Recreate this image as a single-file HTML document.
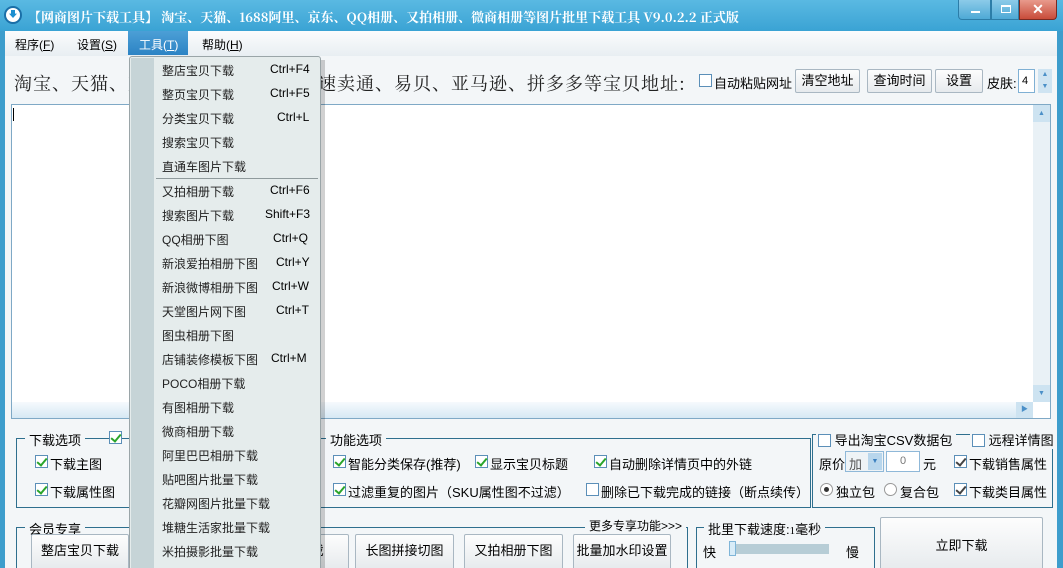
<!DOCTYPE html>
<html><head><meta charset="utf-8"><style>
*{box-sizing:border-box;margin:0;padding:0}
html{width:1063px;height:568px;overflow:hidden}
body{width:1063px;height:568px;overflow:hidden;position:relative;background:#3d9dcc;font-family:"Liberation Sans","Noto Sans CJK SC","WenQuanYi Zen Hei",sans-serif;font-size:12px;color:#000}
.a{position:absolute;white-space:nowrap}
.title{left:0;top:0;width:1063px;height:31px;background:linear-gradient(#5ab9e2,#3aa3d4);}
.client{left:5px;top:31px;width:1052px;height:537px;background:#f3f6f8}
.menubar{left:5px;top:31px;width:1052px;height:25px;background:linear-gradient(#fbfcfd,#e8eef2)}
.cb{position:absolute;width:13px;height:13px;border:1px solid #5b8fb8;background:#fff}
.cb.on::after{content:"";position:absolute;left:3px;top:0px;width:4px;height:8px;border:solid #2aa52a;border-width:0 2px 2px 0;transform:rotate(40deg)}
.cb.g::after{border-color:#444}
.btn{position:absolute;border:1px solid #a9b7c2;border-radius:2px;background:linear-gradient(#fdfdfd,#e6eaed);text-align:center;font-size:13px;white-space:nowrap}
.grp{position:absolute;border:1px solid #2e6f8e}
.lg{position:absolute;background:#f3f6f8;padding:0 4px;font-size:13px;white-space:nowrap}
.mi{position:absolute;left:162px;font-size:12px;color:#222;white-space:nowrap}
</style></head><body>
<div class="a title"></div>
<div class="a" style="left:4px;top:6px;width:18px;height:18px;border-radius:50%;background:#fff;border:2px solid #1a6fa8"><div style="position:absolute;left:3px;top:2px;width:8px;height:8px;background:#1d8fd0;clip-path:polygon(25% 0,75% 0,75% 45%,100% 45%,50% 100%,0 45%,25% 45%)"></div></div>
<div class="a" style="left:28px;top:7px;color:#fff;font-weight:bold;font-size:13px;font-family:'Noto Serif CJK SC','Liberation Serif',serif">【网商图片下载工具】 淘宝、天猫、1688阿里、京东、QQ相册、又拍相册、微商相册等图片批里下载工具 V9.0.2.2 正式版</div>
<div class="a" style="left:958px;top:0;width:33px;height:20px;border:1px solid #2c7da8;border-top:0;border-radius:0 0 0 4px;background:linear-gradient(#8ccbe9,#4ea9d6)"><div style="position:absolute;left:12px;top:11px;width:9px;height:2px;background:#fff"></div></div>
<div class="a" style="left:991px;top:0;width:28px;height:20px;border:1px solid #2c7da8;border-top:0;background:linear-gradient(#8ccbe9,#4ea9d6)"><div style="position:absolute;left:9px;top:5px;width:10px;height:8px;border:1px solid #fff;border-top-width:2px"></div></div>
<div class="a" style="left:1019px;top:0;width:38px;height:20px;border:1px solid #7a2a22;border-top:0;border-radius:0 0 4px 0;background:linear-gradient(#e89a8c,#c84c3a);color:#fff;font-weight:bold;text-align:center;font-size:14px;line-height:18px">✕</div>
<div class="a client"></div>
<div class="a menubar"></div>
<div class="a" style="left:15px;top:36px;font-size:12px">程序(<u>F</u>)</div>
<div class="a" style="left:77px;top:36px;font-size:12px">设置(<u>S</u>)</div>
<div class="a" style="left:128px;top:31px;width:60px;height:24px;background:linear-gradient(#4c9fd6,#2c83c4)"></div>
<div class="a" style="left:139px;top:36px;font-size:12px;color:#fff">工具(<u>T</u>)</div>
<div class="a" style="left:202px;top:36px;font-size:12px">帮助(<u>H</u>)</div>
<div class="a" style="left:14px;top:70px;font-size:18px;letter-spacing:1px;color:#222;font-family:'Noto Serif CJK SC',serif">淘宝、天猫、京东、阿里巴巴、全球速卖通、易贝、亚马逊、拼多多等宝贝地址:</div>
<div class="cb" style="left:699px;top:74px"></div>
<div class="a" style="left:714px;top:73px;font-size:13px">自动粘贴网址</div>
<div class="btn" style="left:795px;top:69px;width:65px;height:24px;line-height:22px">清空地址</div>
<div class="btn" style="left:867px;top:69px;width:65px;height:24px;line-height:22px">查询时间</div>
<div class="btn" style="left:935px;top:69px;width:48px;height:24px;line-height:22px">设置</div>
<div class="a" style="left:987px;top:73px;font-size:13px">皮肤:</div>
<div class="a" style="left:1018px;top:69px;width:17px;height:24px;border:1px solid #7fb0d4;background:#fff;font-size:11px;padding:5px 0 0 3px">4</div>
<div class="a" style="left:1038px;top:69px;width:14px;height:12px;background:#cfe4f2;color:#4b90c8;font-size:7px;text-align:center;line-height:12px">▲</div>
<div class="a" style="left:1038px;top:81px;width:14px;height:12px;background:#cfe4f2;color:#4b90c8;font-size:7px;text-align:center;line-height:12px">▼</div>
<div class="a" style="left:11px;top:104px;width:1040px;height:315px;border:1px solid #7fa9c6;background:#fff"></div>
<div class="a" style="left:13px;top:108px;width:1px;height:13px;background:#000"></div>
<div class="a" style="left:1033px;top:105px;width:17px;height:297px;background:#e9f1f6"></div>
<div class="a" style="left:1033px;top:105px;width:17px;height:17px;background:#cde3f1;color:#4b90c8;font-size:7px;text-align:center;line-height:17px">▲</div>
<div class="a" style="left:1033px;top:385px;width:17px;height:17px;background:#cde3f1;color:#4b90c8;font-size:7px;text-align:center;line-height:17px">▼</div>
<div class="a" style="left:12px;top:402px;width:1021px;height:16px;background:linear-gradient(#f6fafd,#d6e8f4)"></div>
<div class="a" style="left:1016px;top:402px;width:17px;height:16px;background:#cde3f1;color:#4b90c8;font-size:7px;text-align:center;line-height:16px">▶</div>
<div class="grp" style="left:16px;top:438px;width:795px;height:70px"></div>
<div class="lg" style="left:25px;top:430px">下载选项</div>
<div class="cb on" style="left:109px;top:431px;background:#fff"></div>
<div class="lg" style="left:326px;top:430px">功能选项</div>
<div class="cb on" style="left:35px;top:455px"></div><div class="a" style="left:50px;top:454px;font-size:13px">下载主图</div>
<div class="cb on" style="left:35px;top:483px"></div><div class="a" style="left:50px;top:482px;font-size:13px">下载属性图</div>
<div class="cb on" style="left:333px;top:455px"></div><div class="a" style="left:348px;top:454px;font-size:13px">智能分类保存(推荐)</div>
<div class="cb on" style="left:475px;top:455px"></div><div class="a" style="left:490px;top:454px;font-size:13px">显示宝贝标题</div>
<div class="cb on" style="left:594px;top:455px"></div><div class="a" style="left:609px;top:454px;font-size:13px">自动删除详情页中的外链</div>
<div class="cb on" style="left:333px;top:483px"></div><div class="a" style="left:348px;top:482px;font-size:13px">过滤重复的图片（SKU属性图不过滤）</div>
<div class="cb" style="left:586px;top:483px"></div><div class="a" style="left:601px;top:482px;font-size:13px">删除已下载完成的链接（断点续传）</div>
<div class="grp" style="left:812px;top:434px;width:241px;height:74px"></div>
<div class="lg" style="left:816px;top:430px;padding-left:2px"><span class="cb" style="position:relative;display:inline-block;top:2px"></span> 导出淘宝CSV数据包</div>
<div class="lg" style="left:970px;top:430px;padding-left:2px"><span class="cb" style="position:relative;display:inline-block;top:2px"></span> 远程详情图</div>
<div class="a" style="left:819px;top:454px;font-size:13px">原价</div>
<div class="a" style="left:845px;top:451px;width:39px;height:21px;border:1px solid #8fb8d8;background:#eef3f6;font-size:13px;padding:2px 0 0 3px;color:#555">加</div>
<div class="a" style="left:868px;top:453px;width:14px;height:17px;background:#b8d6ec;color:#3a7fbf;font-size:7px;text-align:center;line-height:17px">▼</div>
<div class="a" style="left:886px;top:451px;width:34px;height:21px;border:1px solid #8fb8d8;background:#fff;font-size:11px;text-align:center;line-height:19px;color:#777">0</div>
<div class="a" style="left:923px;top:454px;font-size:13px">元</div>
<div class="cb on g" style="left:954px;top:455px"></div><div class="a" style="left:969px;top:454px;font-size:13px">下载销售属性</div>
<div class="cb on g" style="left:954px;top:483px"></div><div class="a" style="left:969px;top:482px;font-size:13px">下载类目属性</div>
<div class="a" style="left:820px;top:483px;width:13px;height:13px;border-radius:50%;border:1px solid #999;background:#fff"><div style="margin:3px;width:5px;height:5px;border-radius:50%;background:#333"></div></div>
<div class="a" style="left:836px;top:482px;font-size:13px">独立包</div>
<div class="a" style="left:884px;top:483px;width:13px;height:13px;border-radius:50%;border:1px solid #999;background:#fff"></div>
<div class="a" style="left:900px;top:482px;font-size:13px">复合包</div>
<div class="grp" style="left:16px;top:527px;width:672px;height:50px"></div>
<div class="lg" style="left:25px;top:519px">会员专享</div>
<div class="lg" style="left:585px;top:517px;font-size:12px">更多专享功能&gt;&gt;&gt;</div>
<div class="btn" style="left:31px;top:534px;width:98px;height:36px;line-height:32px">整店宝贝下载</div>
<div class="btn" style="left:260px;top:534px;width:89px;height:36px;line-height:32px">&nbsp;&nbsp;&nbsp;&nbsp;&nbsp;&nbsp;&nbsp;载</div>
<div class="btn" style="left:355px;top:534px;width:99px;height:36px;line-height:32px">长图拼接切图</div>
<div class="btn" style="left:464px;top:534px;width:99px;height:36px;line-height:32px">又拍相册下图</div>
<div class="btn" style="left:573px;top:534px;width:98px;height:36px;line-height:32px">批量加水印设置</div>
<div class="grp" style="left:696px;top:527px;width:179px;height:50px"></div>
<div class="lg" style="left:704px;top:519px">批里下载速度:<span style="font-size:11px;font-family:'Liberation Serif',serif">1</span>毫秒</div>
<div class="a" style="left:703px;top:542px;font-size:13px">快</div>
<div class="a" style="left:730px;top:544px;width:99px;height:10px;background:#b7cdd6"></div>
<div class="a" style="left:729px;top:541px;width:7px;height:15px;background:#d8ecf8;border:1px solid #7fb5d8"></div>
<div class="a" style="left:846px;top:542px;font-size:13px">慢</div>
<div class="btn" style="left:880px;top:517px;width:163px;height:55px;line-height:56px">立即下载</div>
<div class="a" style="left:1057px;top:31px;width:6px;height:537px;background:#3d9dcc"></div>
<div class="a" style="left:0;top:31px;width:5px;height:537px;background:#3d9dcc"></div>
<div class="a" style="left:133px;top:60px;width:192px;height:520px;background:rgba(0,0,0,0.18)"></div>
<div class="a" style="left:129px;top:56px;width:192px;height:520px;background:#e5ecec;border:1px solid #9aa5a8;border-radius:3px"></div>
<div class="a" style="left:131px;top:58px;width:23px;height:520px;background:#c6d4d7"></div>
<div class="a" style="left:156px;top:178px;width:162px;height:1px;background:#8f9a9c"></div>
<div class="mi" style="top:62px">整店宝贝下载</div><div class="a" style="left:270px;top:62px">Ctrl+F4</div>
<div class="mi" style="top:86px">整页宝贝下载</div><div class="a" style="left:270px;top:86px">Ctrl+F5</div>
<div class="mi" style="top:110px">分类宝贝下载</div><div class="a" style="left:277px;top:110px">Ctrl+L</div>
<div class="mi" style="top:134px">搜索宝贝下载</div>
<div class="mi" style="top:158px">直通车图片下载</div>
<div class="mi" style="top:183px">又拍相册下载</div><div class="a" style="left:270px;top:183px">Ctrl+F6</div>
<div class="mi" style="top:207px">搜索图片下载</div><div class="a" style="left:265px;top:207px">Shift+F3</div>
<div class="mi" style="top:231px">QQ相册下图</div><div class="a" style="left:273px;top:231px">Ctrl+Q</div>
<div class="mi" style="top:255px">新浪爱拍相册下图</div><div class="a" style="left:276px;top:255px">Ctrl+Y</div>
<div class="mi" style="top:279px">新浪微博相册下图</div><div class="a" style="left:272px;top:279px">Ctrl+W</div>
<div class="mi" style="top:303px">天堂图片网下图</div><div class="a" style="left:276px;top:303px">Ctrl+T</div>
<div class="mi" style="top:327px">图虫相册下图</div>
<div class="mi" style="top:351px">店铺装修模板下图</div><div class="a" style="left:271px;top:351px">Ctrl+M</div>
<div class="mi" style="top:375px">POCO相册下载</div>
<div class="mi" style="top:399px">有图相册下载</div>
<div class="mi" style="top:423px">微商相册下载</div>
<div class="mi" style="top:447px">阿里巴巴相册下载</div>
<div class="mi" style="top:471px">贴吧图片批量下载</div>
<div class="mi" style="top:495px">花瓣网图片批量下载</div>
<div class="mi" style="top:519px">堆糖生活家批量下载</div>
<div class="mi" style="top:543px">米拍摄影批量下载</div>
</body></html>
